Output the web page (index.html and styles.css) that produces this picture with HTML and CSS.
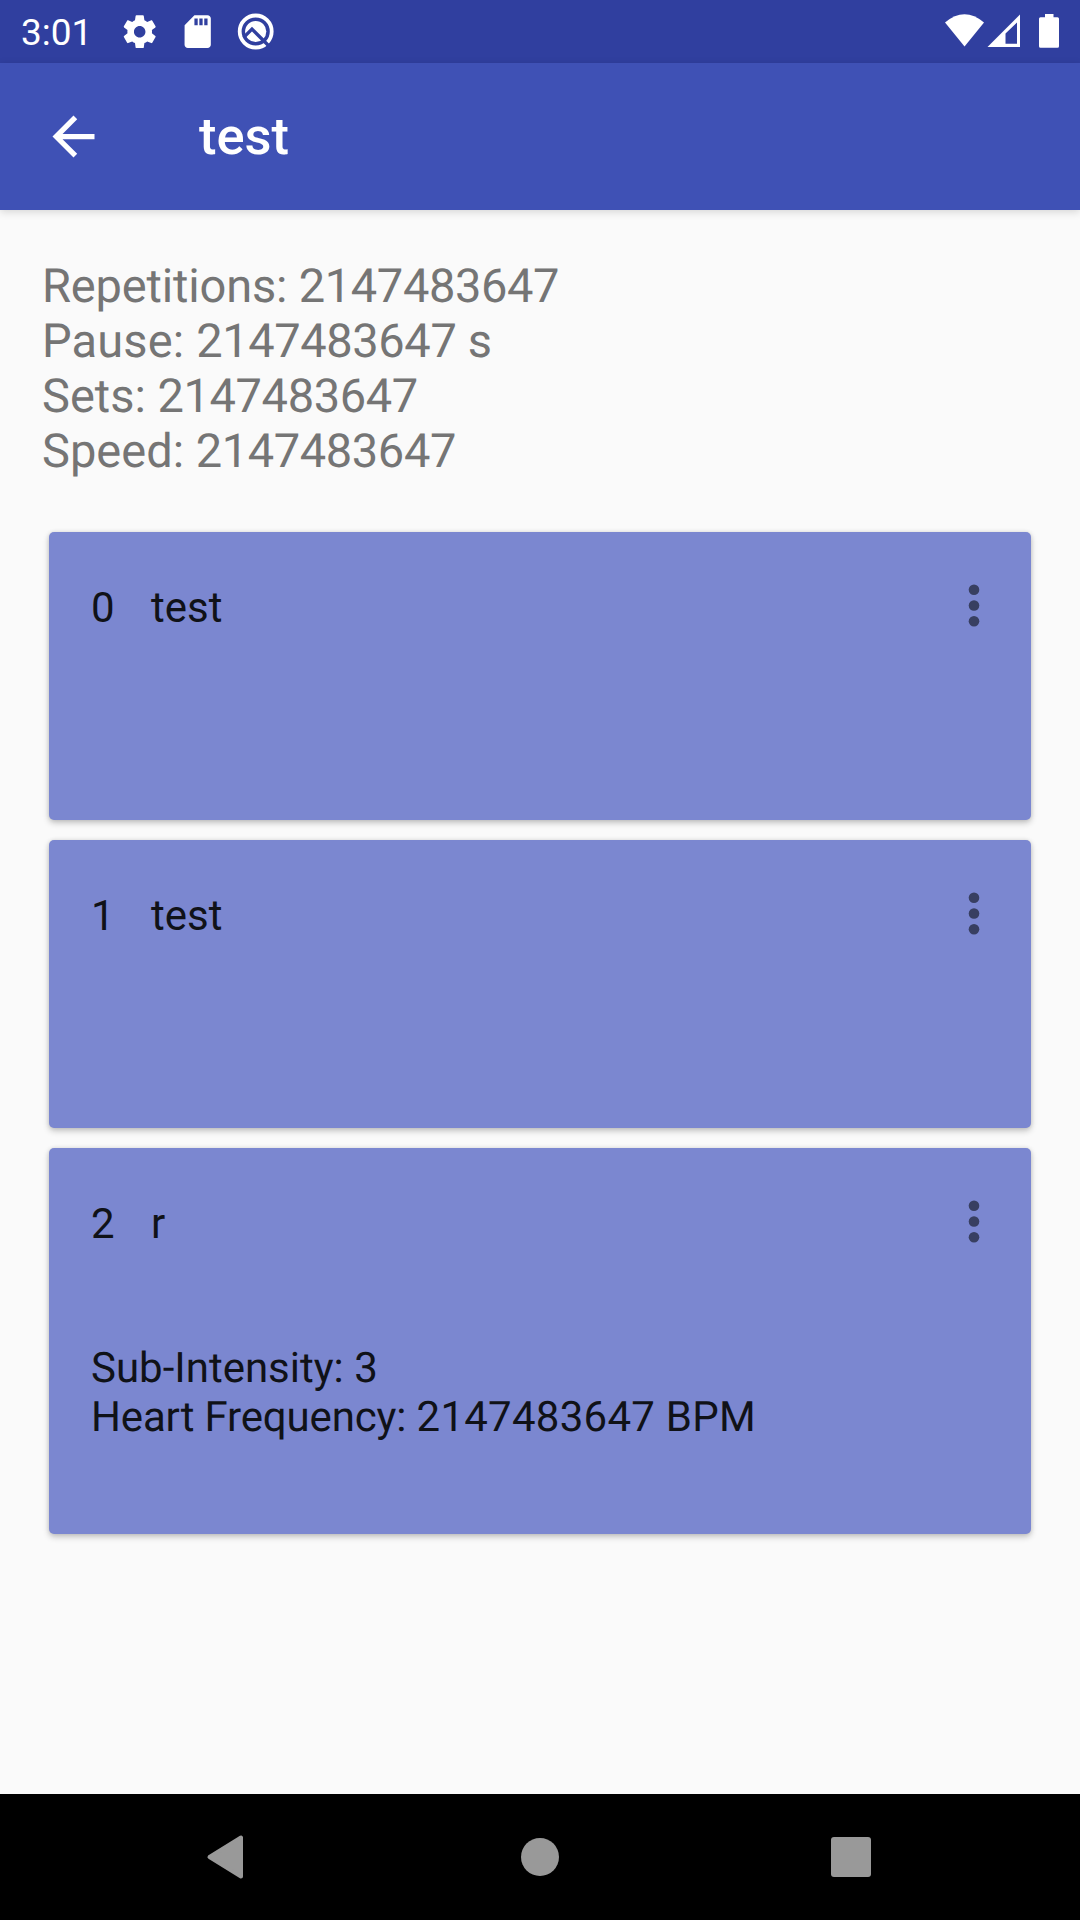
FILE: index.html
```html
<!DOCTYPE html>
<html lang="en">
<head>
<meta charset="utf-8">
<title>test</title>
<link rel="stylesheet" href="styles.css">
</head>
<body>
<div class="screen">
  <header class="status">
    <span class="clock">3:01</span>
    <svg class="status-icon" viewBox="0 0 24 24"><path d="M19.43 12.98c.04-.32.07-.64.07-.98s-.03-.66-.07-.98l2.11-1.65c.19-.15.24-.42.12-.64l-2-3.46c-.12-.22-.39-.3-.61-.22l-2.49 1c-.52-.4-1.08-.73-1.69-.98l-.38-2.65C14.46 2.18 14.25 2 14 2h-4c-.25 0-.46.18-.49.42l-.38 2.65c-.61.25-1.17.59-1.69.98l-2.49-1c-.23-.09-.49 0-.61.22l-2 3.46c-.13.22-.07.49.12.64l2.11 1.65c-.04.32-.07.65-.07.98s.03.66.07.98l-2.110 1.650c-.19.15-.24.42-.12.64l2 3.460c.12.22.39.3.61.22l2.490-1c.52.4 1.080.73 1.690.98l.38 2.650c.03.24.24.42.49.42h4c.25 0 .46-.18.49-.42l.38-2.650c.61-.25 1.170-.59 1.690-.98l2.490 1c.23.09.49 0 .61-.22l2-3.460c.12-.22.07-.49-.12-.64l-2.110-1.650zM12 15.500c-1.930 0-3.500-1.570-3.500-3.500s1.570-3.500 3.500-3.500 3.500 1.570 3.500 3.500-1.570 3.500-3.500 3.500z"/></svg>
    <svg class="status-icon" viewBox="0 0 24 24"><path d="M18 2h-8L4.020 8 4 20c0 1.100.9 2 2 2h12c1.100 0 2-.9 2-2V4c0-1.100-.9-2-2-2zm-6 6h-2V4h2v4zm3 0h-2V4h2v4zm3 0h-2V4h2v4z"/></svg>
    <svg class="status-icon" viewBox="236.300 11.800 39.400 39.400"><circle class="ring" cx="256" cy="31.300" r="16"/><circle cx="256" cy="31.300" r="10.600"/><path class="cut" d="M244 37.200L252.300 28.900L271 47.600"/></svg>
    <svg class="system" viewBox="0 0 130 63"><path d="M10 22.500Q29.500 6 49 22.500L29.500 46.500z"/><path fill-rule="evenodd" d="M85 14.500V47H52.500zM82 22.500L70.500 33.500V43.700H82z"/><path d="M110 14h8.500v3.300h4a1.500 1.500 0 0 1 1.500 1.500v27.500a1.500 1.500 0 0 1-1.500 1.500h-17a1.500 1.500 0 0 1-1.500-1.500V18.800a1.500 1.500 0 0 1 1.500-1.500h4.500z"/></svg>
  </header>
  <nav class="appbar">
    <svg class="back" viewBox="0 0 24 24"><path d="M20 11H7.830l5.590-5.590L12 4l-8 8 8 8 1.410-1.410L7.830 13H20v-2z"/></svg>
    <h1 class="title">test</h1>
  </nav>
  <main class="content">
    <section class="summary">
      <div><span class="label-long">Repetitions: </span><span class="value">2147483647</span></div>
      <div><span class="label">Pause: </span><span class="value">2147483647 s</span></div>
      <div>Sets: <span class="value">2147483647</span></div>
      <div>Speed: <span class="value">2147483647</span></div>
    </section>
    <section class="cards">
      <article class="card">
        <div class="row"><span class="index">0</span><span>test</span><svg class="more" viewBox="0 0 12 43"><circle cx="6" cy="5.700" r="5.300"/><circle cx="6" cy="21.500" r="5.300"/><circle cx="6" cy="37.300" r="5.300"/></svg></div>
      </article>
      <article class="card">
        <div class="row"><span class="index">1</span><span>test</span><svg class="more" viewBox="0 0 12 43"><circle cx="6" cy="5.700" r="5.300"/><circle cx="6" cy="21.500" r="5.300"/><circle cx="6" cy="37.300" r="5.300"/></svg></div>
      </article>
      <article class="card card-detail">
        <div class="row"><span class="index">2</span><span>r</span><svg class="more" viewBox="0 0 12 43"><circle cx="6" cy="5.700" r="5.300"/><circle cx="6" cy="21.500" r="5.300"/><circle cx="6" cy="37.300" r="5.300"/></svg></div>
        <div class="details"><div>Sub-Intensity: 3</div><div><span class="label-long">Heart Frequency: </span><span class="rate">2147483647 BPM</span></div></div>
      </article>
    </section>
  </main>
  <footer class="navbar">
    <svg viewBox="0 0 60 60"><path d="M42 10.500V49.500L10.500 30z"/></svg>
    <svg viewBox="0 0 60 60"><circle class="home" cx="30" cy="30" r="19"/></svg>
    <svg viewBox="0 0 60 60"><rect class="recent" x="10" y="10" width="40" height="40" rx="3"/></svg>
  </footer>
</div>
</body>
</html>
```
FILE: styles.css
```css
* { box-sizing: border-box; }
body { margin: 0; font-family: Roboto, sans-serif; }
svg { display: block; flex: none; }
.screen { width: 1080px; height: 1920px; display: flex; flex-direction: column; background: #fafafa; overflow: hidden; }
.status { height: 63px; flex: none; display: flex; align-items: center; padding-left: 21px; background: #303f9f; color: #fff; fill: #fff; }
.clock { width: 99px; font-size: 37px; line-height: 44px; padding-top: 3px; }
.status-icon { width: 39.4px; height: 39.4px; margin-right: 18.6px; }
.ring { fill: none; stroke: #fff; stroke-width: 3.8; }
.cut { fill: none; stroke: #303f9f; stroke-width: 3.4; }
.system { width: 130px; height: 63px; margin-left: auto; margin-right: 15px; }
.appbar { height: 147px; flex: none; display: flex; align-items: center; padding-left: 42px; background: #3f51b5; color: #fff; fill: #fff; box-shadow: 0 2px 8px rgba(0, 0, 0, .15); z-index: 1; }
.back { width: 63px; height: 63px; }
.title { margin: -2px 0 0 94px; font-size: 52.5px; line-height: 62px; font-weight: 500; }
.content { flex: 1; padding: 49px 42px 0; }
.summary { height: 220px; font-size: 47px; line-height: 55px; color: #757575; text-rendering: geometricPrecision; }
.value { letter-spacing: -.39px; }
.label { letter-spacing: .15px; }
.label-long { letter-spacing: -.16px; }
.rate { letter-spacing: .26px; }
.cards { display: flex; flex-direction: column; gap: 20px; padding: 53px 7px 0; }
.card { height: 288px; padding: 51px 42px 0; border-radius: 5px; background: #7b87d0; color: #101218; font-size: 42px; line-height: 49px; box-shadow: 0 3px 6px rgba(0, 0, 0, .22), 0 0 4px rgba(0, 0, 0, .1); }
.card-detail { height: 386px; }
.row { display: flex; height: 49px; }
.index { width: 60px; }
.more { width: 12px; height: 43px; margin: 1px 9.5px 0 auto; fill: #383f61; }
.details { padding-top: 96px; text-rendering: geometricPrecision; }
.navbar { height: 126px; flex: none; display: flex; justify-content: space-between; align-items: center; padding: 0 199px; background: #000; }
.navbar svg { width: 60px; height: 60px; fill: #999; stroke: #999; }
.navbar path { stroke-width: 4; stroke-linejoin: round; }
.navbar .home, .navbar .recent { stroke: none; }
```
